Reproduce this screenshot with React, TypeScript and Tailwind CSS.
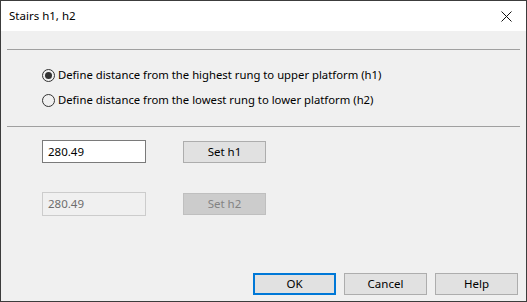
import { useState } from "react";

const font = { fontFamily: '"Noto Sans", "Segoe UI", sans-serif' };

function Radio({ checked, label, onClick }: { checked: boolean; label: string; onClick: () => void }) {
  return (
    <div className="flex h-[25px] items-center cursor-default" onClick={onClick}>
      <span className="flex h-[13px] w-[13px] items-center justify-center rounded-full border border-[#333333] bg-[#f0f0f0]">
        {checked && <span className="h-[7px] w-[7px] rounded-full bg-[#333333]" />}
      </span>
      <span className="ml-[3px] text-[11.3px] text-black">{label}</span>
    </div>
  );
}

function Btn({ children, primary, disabled }: { children: string; primary?: boolean; disabled?: boolean }) {
  const cls = disabled
    ? "border border-[#bfbfbf] bg-[#cccccc] text-[#838383]"
    : primary
      ? "border-2 border-[#0078d7] bg-[#e1e1e1] text-black"
      : "border border-[#adadad] bg-[#e1e1e1] text-black";
  return (
    <button className={`flex h-[22px] w-[83px] items-center justify-center text-[11.5px] leading-none ${cls}`}>
      {children}
    </button>
  );
}

export default function App() {
  const [mode, setMode] = useState<"h1" | "h2">("h1");

  return (
    <div
      className="flex h-[302px] w-[527px] flex-col border border-[#3c3c3c] bg-[#f0f0f0] select-none"
      style={font}
    >
      <div className="flex h-[30px] items-center justify-between bg-white pl-[8px] pr-[9px]">
        <span className="text-[11.5px] text-black">Stairs h1, h2</span>
        <svg width="11" height="11" viewBox="0 0 11 11" className="mr-[5px]">
          <path d="M0.5 0.5 L10.5 10.5 M10.5 0.5 L0.5 10.5" stroke="#111" strokeWidth="1" />
        </svg>
      </div>

      <div className="flex flex-1 flex-col">
        <div className="mx-[6px] mt-[18px] h-px bg-[#a0a0a0]" />

        <div className="mt-[13px] flex flex-col pl-[41px]">
          <Radio
            checked={mode === "h1"}
            label="Define distance from the highest rung to upper platform (h1)"
            onClick={() => setMode("h1")}
          />
          <Radio
            checked={mode === "h2"}
            label="Define distance from the lowest rung to lower platform (h2)"
            onClick={() => setMode("h2")}
          />
        </div>

        <div className="mx-[6px] mt-[13px] h-px bg-[#a0a0a0]" />

        <div className="mt-[13px] flex items-start pl-[41px]">
          <div className="flex h-[23px] w-[104px] items-center border border-[#7a7a7a] bg-white pl-[5px] text-[11.5px] text-black">
            280.49
          </div>
          <div className="ml-[37px] mt-px">
            <Btn>Set h1</Btn>
          </div>
        </div>

        <div className="mt-[29px] flex items-start pl-[41px]">
          <div className="flex h-[24px] w-[104px] items-center border border-[#cccccc] bg-[#f0f0f0] pl-[5px] text-[11.5px] text-[#6d6d6d]">
            280.49
          </div>
          <div className="ml-[37px] mt-px">
            <Btn disabled>Set h2</Btn>
          </div>
        </div>

        <div className="mt-auto mb-[6px] flex justify-end gap-[8px] pr-[8px]">
          <Btn primary>OK</Btn>
          <Btn>Cancel</Btn>
          <Btn>Help</Btn>
        </div>
      </div>
    </div>
  );
}
